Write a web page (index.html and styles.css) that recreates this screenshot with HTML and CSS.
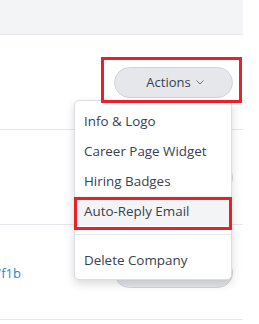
FILE: index.html
```html
<!DOCTYPE html>
<html lang="en">
<head>
    <meta charset="UTF-8">
    <meta name="viewport" content="width=device-width, initial-scale=1.0">
    <title>Companies</title>
    <link rel="stylesheet" href="styles.css">
</head>
<body>
    <div class="table">
        <div class="table-head"></div>
        <div class="row">
            <div class="cell-main"></div>
            <button class="actions-btn">Actions
                <svg class="chevron" width="8" height="5" viewBox="0 0 8 5"><polyline points="0.5,0.5 4,4 7.5,0.5" fill="none" stroke="#6b7280" stroke-width="1"/></svg>
            </button>
        </div>
        <div class="row">
            <div class="cell-main"></div>
            <button class="actions-btn">Actions
                <svg class="chevron" width="8" height="5" viewBox="0 0 8 5"><polyline points="0.5,0.5 4,4 7.5,0.5" fill="none" stroke="#6b7280" stroke-width="1"/></svg>
            </button>
        </div>
        <div class="row">
            <div class="cell-main"><a class="company-id" href="#">3e7f1b</a></div>
            <button class="actions-btn">Actions
                <svg class="chevron" width="8" height="5" viewBox="0 0 8 5"><polyline points="0.5,0.5 4,4 7.5,0.5" fill="none" stroke="#6b7280" stroke-width="1"/></svg>
            </button>
        </div>
    </div>

    <!-- open menu of the first row -->
    <div class="dropdown">
        <a class="dropdown-item" href="#">Info &amp; Logo</a>
        <a class="dropdown-item" href="#">Career Page Widget</a>
        <a class="dropdown-item" href="#">Hiring Badges</a>
        <a class="dropdown-item active" href="#">Auto-Reply Email</a>
        <div class="dropdown-divider"></div>
        <a class="dropdown-item" href="#">Delete Company</a>
    </div>

    <!-- annotation boxes -->
    <div class="mark mark-button"></div>
    <div class="mark mark-item"></div>
</body>
</html>
```
FILE: styles.css
```css
body {
    margin: 0;
    font-family: "Open Sans", "Noto Sans", Arial, sans-serif;
    background: #ffffff;
    color: #374151;
    position: relative;
    width: 259px;
    height: 324px;
    overflow: hidden;
}
.table {
    width: 243px;
}
.table-head {
    height: 34px;
    background: #f3f4f6;
    border-bottom: 1px solid #e5e7eb;
}
.row {
    height: 94px;
    border-bottom: 1px solid #e5e7eb;
    display: flex;
    align-items: center;
    justify-content: space-between;
    padding-right: 10px;
}
.cell-main {
    flex: 1;
    overflow: hidden;
}
.company-id {
    display: inline-block;
    margin-left: -21px;
    color: #1a8ad8;
    font-size: 13px;
    text-decoration: none;
}
.actions-btn {
    width: 119px;
    height: 31px;
    border: 1px solid #d1d5db;
    border-radius: 16px;
    background: #e5e7eb;
    color: #374151;
    font-family: inherit;
    font-size: 13px;
    display: flex;
    align-items: center;
    justify-content: center;
    gap: 5px;
    padding: 0 0 0 3px;
}
.chevron {
    margin-top: 1px;
}
.dropdown {
    position: absolute;
    top: 100px;
    left: 74px;
    width: 156px;
    padding: 5px 0 4px;
    background: #ffffff;
    border: 1px solid #d9dce1;
    border-radius: 5px;
    box-shadow: 0 4px 10px rgba(0, 0, 0, 0.15);
}
.dropdown-item {
    display: flex;
    align-items: center;
    height: 30px;
    padding: 0 9px;
    font-size: 13.4px;
    color: #374151;
    text-decoration: none;
}
.dropdown-item.active {
    background: #f3f4f6;
}
.dropdown-divider {
    height: 1px;
    background: #e5e7eb;
    margin: 8px 0 10px;
}
.mark {
    position: absolute;
    border: 3px solid #e8202a;
    box-sizing: border-box;
}
.mark-button {
    top: 57px;
    left: 101px;
    width: 141px;
    height: 46px;
}
.mark-item {
    top: 197px;
    left: 74px;
    width: 158px;
    height: 33px;
}
```
